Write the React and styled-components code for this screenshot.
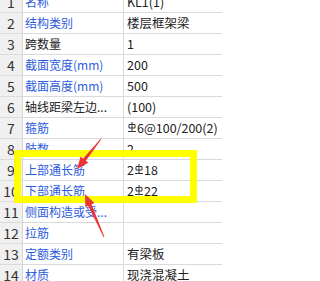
import React from 'react';
import styled, { createGlobalStyle } from 'styled-components';

const GlobalStyle = createGlobalStyle`
  html, body {
    margin: 0;
    padding: 0;
    background: #fff;
  }
  body {
    font-family: "Noto Sans CJK SC", sans-serif;
  }
`;

const Viewport = styled.div`
  position: relative;
  width: 222px;
  height: 281px;
  overflow: hidden;
  background: #fff;
`;

const Table = styled.div`
  display: flex;
  flex-direction: column;
  margin-top: -8px;
`;

const Row = styled.div`
  display: grid;
  grid-template-columns: 23px 101px 1fr;
  height: 21px;
  box-sizing: border-box;
  border-bottom: 1px solid #dadada;
`;

const NumCell = styled.div`
  background: #f0f0f0;
  border-right: 1px solid #d4d4d4;
  color: #333;
  font-size: 14px;
  line-height: 20px;
  text-align: center;
`;

const NameCell = styled.div`
  border-right: 1px solid #dadada;
  padding-left: 2px;
  color: ${(p) => (p.$plain ? '#222' : '#2d5ce0')};
  font-size: 12px;
  line-height: 20px;
  white-space: nowrap;
  overflow: hidden;
`;

const ValueCell = styled.div`
  padding-left: 3px;
  color: #222;
  font-size: 12.5px;
  line-height: 20px;
  white-space: nowrap;
  overflow: hidden;
  display: flex;
  align-items: center;
`;

const Mark = styled.svg`
  width: 8px;
  height: 10px;
  margin: 0 1px 2px;
`;

const Highlight = styled.div`
  position: absolute;
  left: 14px;
  top: 150px;
  width: 183px;
  height: 53px;
  box-sizing: border-box;
  border: 7px solid #ffff00;
  pointer-events: none;
`;

const Overlay = styled.svg`
  position: absolute;
  left: 0;
  top: 0;
  pointer-events: none;
`;

// grade III rebar symbol
function RebarMark() {
  return (
    <Mark viewBox="0 0 8 10">
      <path d="M4 0V9M1 2.5h6v3.5H1zM0 9.5h8" fill="none" stroke="#333" strokeWidth="1" />
    </Mark>
  );
}

const rows = [
  { name: '名称', value: 'KL1(1)' },
  { name: '结构类别', value: '楼层框架梁' },
  { name: '跨数量', value: '1', plain: true },
  { name: '截面宽度(mm)', value: '200' },
  { name: '截面高度(mm)', value: '500' },
  { name: '轴线距梁左边...', value: '(100)', plain: true },
  { name: '箍筋', value: [null, '6@100/200(2)'] },
  { name: '肢数', value: '2' },
  { name: '上部通长筋', value: ['2', '18'] },
  { name: '下部通长筋', value: ['2', '22'] },
  { name: '侧面构造或受...', value: '' },
  { name: '拉筋', value: '' },
  { name: '定额类别', value: '有梁板' },
  { name: '材质', value: '现浇混凝土' },
];

function arrowPoints(tx, ty, px, py) {
  const dx = px - tx;
  const dy = py - ty;
  const len = Math.hypot(dx, dy);
  const ux = dx / len;
  const uy = dy / len;
  const nx = -uy;
  const ny = ux;
  const headLen = 12;
  const headW = 5;
  const shaftW = 1.8;
  const tailW = 0.4;
  const bx = px - ux * headLen;
  const by = py - uy * headLen;
  const pts = [
    [tx + nx * tailW, ty + ny * tailW],
    [bx + nx * shaftW, by + ny * shaftW],
    [bx + nx * headW, by + ny * headW],
    [px, py],
    [bx - nx * headW, by - ny * headW],
    [bx - nx * shaftW, by - ny * shaftW],
    [tx - nx * tailW, ty - ny * tailW],
  ];
  return pts.map((p) => p.map((v) => v.toFixed(1)).join(',')).join(' ');
}

function Value({ value }) {
  if (Array.isArray(value)) {
    return (
      <ValueCell>
        {value[0]}
        <RebarMark />
        {value[1]}
      </ValueCell>
    );
  }
  return <ValueCell>{value}</ValueCell>;
}

export default function App() {
  return (
    <Viewport>
      <GlobalStyle />
      <Table>
        {rows.map((r, i) => (
          <Row key={i}>
            <NumCell>{i + 1}</NumCell>
            <NameCell $plain={r.plain}>{r.name}</NameCell>
            <Value value={r.value} />
          </Row>
        ))}
      </Table>
      <Highlight />
      <Overlay width="222" height="281" viewBox="0 0 222 281">
        <polygon points={arrowPoints(101, 139, 77, 169)} fill="#ef3434" />
        <polygon points={arrowPoints(104, 237, 85, 194)} fill="#ef3434" />
      </Overlay>
    </Viewport>
  );
}
